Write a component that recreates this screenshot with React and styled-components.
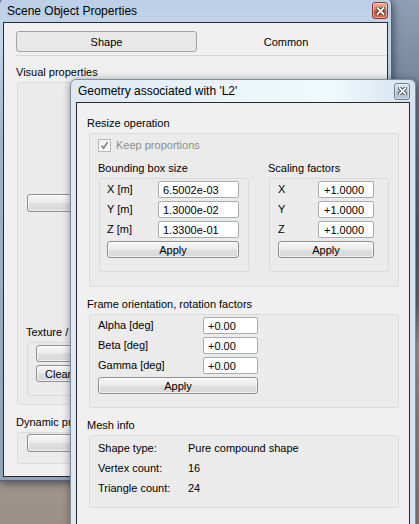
import React from "react";
import styled, { createGlobalStyle } from "styled-components";

const GlobalStyle = createGlobalStyle`
  html, body { margin: 0; padding: 0; }
  body {
    font-family: "Liberation Sans", Arial, sans-serif;
    font-size: 11px;
    color: #000;
  }
`;

const Desktop = styled.div`
  position: relative;
  width: 419px;
  height: 524px;
  overflow: hidden;
  background: linear-gradient(
    180deg,
    #8fa0b5 0%,
    #72839a 18%,
    #5d6b7d 45%,
    #6c7480 58%,
    #b0aba4 66%,
    #a39b92 80%,
    #9a9188 100%
  );
`;

const Window = styled.div`
  position: absolute;
  left: ${(p) => p.$x}px;
  top: ${(p) => p.$y}px;
  width: ${(p) => p.$w}px;
  height: ${(p) => p.$h}px;
  box-sizing: border-box;
  display: flex;
  flex-direction: column;
  padding: 0 ${(p) => p.$side}px ${(p) => p.$side}px;
  background: ${(p) => p.$frame};
  border: 1px solid ${(p) => p.$edge};
  border-radius: 6px 6px 0 0;
  box-shadow: 1px 2px 9px rgba(0, 0, 0, 0.5);
`;

const TitleBar = styled.div`
  flex: none;
  height: ${(p) => p.$h}px;
  display: flex;
  align-items: center;
  justify-content: space-between;
  padding-left: ${(p) => p.$pl}px;
  padding-right: ${(p) => p.$pr}px;
`;

const TitleText = styled.span`
  font-size: 12px;
  white-space: nowrap;
  color: #000;
`;

const CloseBtn = styled.div`
  width: 16px;
  height: 17px;
  box-sizing: border-box;
  border-radius: 3px;
  display: flex;
  align-items: center;
  justify-content: center;
  border: 1px solid ${(p) => (p.$active ? "#8b3b2a" : "#6d7e92")};
  background: ${(p) =>
    p.$active
      ? "linear-gradient(180deg, #efb19b 0%, #dd7a5d 45%, #c9502f 55%, #d66a4c 100%)"
      : "linear-gradient(180deg, #e2e9f1 0%, #c3cfdc 45%, #aab9ca 55%, #bccada 100%)"};
  box-shadow: inset 0 0 0 1px rgba(255, 255, 255, 0.4);
`;

const Client = styled.div`
  flex: 1;
  min-height: 0;
  border: 1px solid #2a2a2a;
  background: #f0f0f0;
  display: flex;
  flex-direction: column;
  overflow: hidden;
`;

const Body = styled.div`
  display: flex;
  flex-direction: column;
  padding: ${(p) => p.$pad};
`;

const TabBar = styled.div`
  display: flex;
  margin-left: 12px;
  padding: 8px 0 3px 0;
  border-bottom: 1px solid #d6d6d6;
`;

const Tab = styled.div`
  box-sizing: border-box;
  width: ${(p) => p.$w}px;
  height: 21px;
  display: flex;
  align-items: center;
  justify-content: center;
  font-size: 11px;
  border-radius: 3px;
  border: 1px solid ${(p) => (p.$selected ? "#a3a3a3" : "transparent")};
  background: ${(p) => (p.$selected ? "#e8e8e8" : "transparent")};
`;

const SectionTitle = styled.div`
  height: 20px;
  line-height: 20px;
  white-space: nowrap;
  margin-top: ${(p) => p.$mt || 0}px;
  margin-left: ${(p) => p.$ml || 0}px;
  align-self: ${(p) => (p.$fit ? "flex-start" : "stretch")};
`;

/* text of the back window that runs under the front window is clipped where it disappears */
const Clip = styled.span`
  display: inline-block;
  max-width: ${(p) => p.$max}px;
  overflow: hidden;
  white-space: nowrap;
  vertical-align: top;
`;

const Group = styled.div`
  box-sizing: border-box;
  margin-left: ${(p) => p.$ml ?? 2}px;
  width: ${(p) => (p.$w ? `${p.$w}px` : "auto")};
  border: 1px solid #dadada;
  border-radius: 3px;
  background: #ebebeb;
  padding: ${(p) => p.$pad};
  display: flex;
  flex-direction: column;
`;

const CheckRow = styled.label`
  height: 16px;
  display: flex;
  align-items: center;
  gap: 5px;
  color: #8d8d8d;
  font-size: 11px;
  margin-left: -1px;
`;

const CheckBox = styled.span`
  width: 13px;
  height: 13px;
  box-sizing: border-box;
  border: 1px solid #b8b8b8;
  background: linear-gradient(180deg, #f2f2f2, #fafafa);
  display: flex;
  align-items: center;
  justify-content: center;
`;

const Columns = styled.div`
  display: flex;
  gap: 20px;
  margin-top: 5px;
`;

const Column = styled.div`
  display: flex;
  flex-direction: column;
  width: ${(p) => p.$w}px;
`;

const FieldGrid = styled.div`
  display: grid;
  grid-template-columns: ${(p) => p.$cols};
  row-gap: 3px;
  align-items: center;
`;

const FieldLabel = styled.span`
  line-height: 17px;
  white-space: nowrap;
`;

const Field = styled.input`
  box-sizing: border-box;
  width: 100%;
  height: 17px;
  margin: 0;
  padding: 0 0 0 ${(p) => p.$pl || 4}px;
  border: 1px solid #a9abb2;
  border-radius: 2px;
  background: #fff;
  font-family: "Liberation Sans", Arial, sans-serif;
  font-size: 11px;
  color: #000;
  outline: none;
`;

const Button = styled.button`
  box-sizing: border-box;
  grid-column: 1 / -1;
  width: ${(p) => (p.$w ? `${p.$w}px` : "auto")};
  height: ${(p) => p.$h || 17}px;
  margin: 0;
  padding: 0 0 0 ${(p) => p.$pl || 0}px;
  text-align: ${(p) => (p.$pl ? "left" : "center")};
  border: 1px solid #8f8f8f;
  border-radius: 3px;
  background: linear-gradient(180deg, #f6f6f6 0%, #ececec 48%, #dedede 52%, #d9d9d9 100%);
  box-shadow: inset 0 0 0 1px rgba(255, 255, 255, 0.6);
  font-family: "Liberation Sans", Arial, sans-serif;
  font-size: 11px;
  color: #000;
  flex: none;
`;

const ButtonStack = styled.div`
  display: flex;
  flex-direction: column;
  gap: 3px;
`;

const InfoGrid = styled.div`
  display: grid;
  grid-template-columns: 90px auto;
  grid-auto-rows: 20px;
  align-items: center;
`;

const CloseGlyph = () => (
  <svg width="9" height="8" viewBox="0 0 9 8">
    <path d="M1.5 1 L7.5 7 M7.5 1 L1.5 7" stroke="#2b2b2b" strokeWidth="3.4" strokeLinecap="square" />
    <path d="M1.5 1 L7.5 7 M7.5 1 L1.5 7" stroke="#fff" strokeWidth="1.8" strokeLinecap="square" />
  </svg>
);

const CheckGlyph = () => (
  <svg width="9" height="9" viewBox="0 0 9 9">
    <path d="M1.5 4.5 L3.5 7.2 L7.6 1.2" fill="none" stroke="#8a8a8a" strokeWidth="1.8" />
  </svg>
);

const FieldRows = ({ rows, pl }) =>
  rows.map(([label, value]) => (
    <React.Fragment key={label}>
      <FieldLabel>{label}</FieldLabel>
      <Field readOnly defaultValue={value} $pl={pl} />
    </React.Fragment>
  ));

function BackWindow() {
  return (
    <Window $x={-1} $y={-2} $w={393} $h={483} $side={3} $edge="#51647c"
      $frame="linear-gradient(180deg, #bccfe7 0%, #c3d5ea 40px, #9fb3cb 140px, #8ea2bc 100%)">
      <TitleBar $h={23} $pl={4} $pr={0}>
        <TitleText>Scene Object Properties</TitleText>
        <CloseBtn $active>
          <CloseGlyph />
        </CloseBtn>
      </TitleBar>
      <Client>
        <TabBar>
          <Tab $w={181} $selected>Shape</Tab>
          <Tab $w={178}>Common</Tab>
        </TabBar>
        <Body $pad="0 0 0 12px">
          <SectionTitle $mt={6}>Visual properties</SectionTitle>
          <Group $ml={1} $pad="111px 0 8px 9px">
            <Button $h={18} $w={300} aria-label="Adjust color" />
            <SectionTitle $mt={110} $ml={-1} $fit>
              <Clip $max={44}>Texture / material</Clip>
            </SectionTitle>
            <Group $ml={0} $pad="2px 0 13px 8px">
              <ButtonStack>
                <Button $w={260} aria-label="Load texture" />
                <Button $w={260} $pl={8}>
                  <Clip $max={25}>Clear texture</Clip>
                </Button>
              </ButtonStack>
            </Group>
          </Group>
          <SectionTitle $mt={7} $fit>
            <Clip $max={54}>Dynamic properties</Clip>
          </SectionTitle>
          <Group $ml={1} $pad="1px 0 11px 9px">
            <Button $h={18} $w={300} aria-label="Show dynamic properties dialog" />
          </Group>
        </Body>
      </Client>
    </Window>
  );
}

function GeometryWindow() {
  return (
    <Window $x={70} $y={79} $w={346} $h={452} $side={5} $edge="#7d8fa5"
      $frame="linear-gradient(90deg, #dde8f2 0%, #eaf4fa 45%, #f0f9fd 75%, #d6e3ef 100%)">
      <TitleBar $h={22} $pl={2} $pr={0}>
        <TitleText>Geometry associated with 'L2'</TitleText>
        <CloseBtn>
          <CloseGlyph />
        </CloseBtn>
      </TitleBar>
      <Client>
        <Body $pad="10px 10px 0 10px">
          <SectionTitle>Resize operation</SectionTitle>
          <Group $pad="3px 9px 14px 9px">
            <CheckRow>
              <CheckBox>
                <CheckGlyph />
              </CheckBox>
              Keep proportions
            </CheckRow>
            <Columns>
              <Column $w={150}>
                <SectionTitle $ml={-1}>Bounding box size</SectionTitle>
                <Group $ml={0} $pad="2px 9px 13px 7px">
                  <FieldGrid $cols="51px 81px">
                    <FieldRows
                      pl={4}
                      rows={[
                        ["X [m]", "6.5002e-03"],
                        ["Y [m]", "1.3000e-02"],
                        ["Z [m]", "1.3300e-01"],
                      ]}
                    />
                    <Button>Apply</Button>
                  </FieldGrid>
                </Group>
              </Column>
              <Column $w={120}>
                <SectionTitle $ml={-1}>Scaling factors</SectionTitle>
                <Group $ml={0} $pad="2px 14px 13px 8px">
                  <FieldGrid $cols="40px 56px">
                    <FieldRows
                      pl={5}
                      rows={[
                        ["X", "+1.0000"],
                        ["Y", "+1.0000"],
                        ["Z", "+1.0000"],
                      ]}
                    />
                    <Button>Apply</Button>
                  </FieldGrid>
                </Group>
              </Column>
            </Columns>
          </Group>

          <SectionTitle $mt={7}>Frame orientation, rotation factors</SectionTitle>
          <Group $pad="2px 0 13px 8px">
            <FieldGrid $cols="105px 55px">
              <FieldRows
                pl={4}
                rows={[
                  ["Alpha [deg]", "+0.00"],
                  ["Beta [deg]", "+0.00"],
                  ["Gamma [deg]", "+0.00"],
                ]}
              />
              <Button>Apply</Button>
            </FieldGrid>
          </Group>

          <SectionTitle $mt={7}>Mesh info</SectionTitle>
          <Group $pad="2px 0 9px 8px">
            <InfoGrid>
              <span>Shape type:</span>
              <span>Pure compound shape</span>
              <span>Vertex count:</span>
              <span>16</span>
              <span>Triangle count:</span>
              <span>24</span>
            </InfoGrid>
          </Group>
        </Body>
      </Client>
    </Window>
  );
}

export default function App() {
  return (
    <>
      <GlobalStyle />
      <Desktop>
        <BackWindow />
        <GeometryWindow />
      </Desktop>
    </>
  );
}
